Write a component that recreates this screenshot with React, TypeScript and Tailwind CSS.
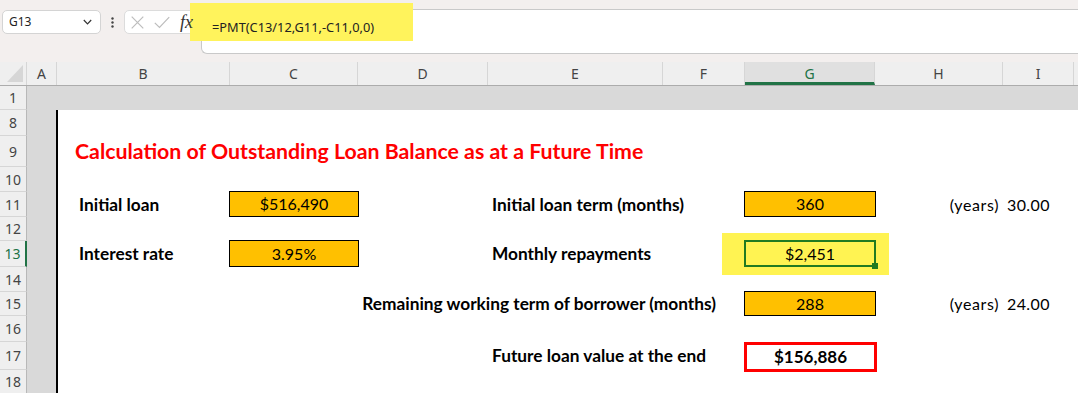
import React from 'react';

const UI_FONT = "font-['Noto_Sans',sans-serif]";
const SHEET_FONT = "font-['Lato','Liberation_Sans',sans-serif]";

const COLUMNS = [
  { label: 'A', w: 'w-[30px]' },
  { label: 'B', w: 'w-[173px]' },
  { label: 'C', w: 'w-[128px]' },
  { label: 'D', w: 'w-[130px]' },
  { label: 'E', w: 'w-[175px]' },
  { label: 'F', w: 'w-[82px]' },
  { label: 'G', w: 'w-[130px]' },
  { label: 'H', w: 'w-[128px]' },
  { label: 'I', w: 'w-[71px]' },
];

const RowHeader: React.FC<{ n: number; selected?: boolean }> = ({ n, selected }) => (
  <div
    className={`flex w-[27px] shrink-0 items-center justify-center border-b border-[#d6d6d6] bg-[#efefef] text-[14px] ${UI_FONT} ${
      selected ? 'border-r-2 border-r-[#217346] text-[#217346]' : 'border-r border-r-[#b8b8b8] text-[#444]'
    }`}
  >
    {n}
  </div>
);

// one sheet row: row header, grey column A, then white cells from column B
const SheetRow: React.FC<{ n: number; h: string; selected?: boolean; children?: React.ReactNode }> = ({ n, h, selected, children }) => (
  <div className={`flex ${h}`}>
    <RowHeader n={n} selected={selected} />
    <div className="w-[29px] shrink-0 bg-[#d9d9d9]" />
    <div className={`flex flex-1 items-stretch border-l-2 border-black ${SHEET_FONT} text-[16px] text-black`}>{children}</div>
  </div>
);

const Label: React.FC<{ w: string; pl?: string; children: React.ReactNode }> = ({ w, pl = 'pl-[4px]', children }) => (
  <div className={`${w} shrink-0 flex items-center whitespace-nowrap text-[17.3px] font-bold ${pl}`}>{children}</div>
);

const InputBox: React.FC<{ w: string; children: React.ReactNode }> = ({ w, children }) => (
  <div className={`${w} shrink-0`}>
    <div className="-mt-px -ml-px flex h-[calc(100%+1px)] w-[calc(100%+2px)] items-center justify-center border border-black bg-[#ffc000]">
      {children}
    </div>
  </div>
);

const Gap: React.FC<{ w: string }> = ({ w }) => <div className={`${w} shrink-0`} />;

const Years: React.FC<{ value: string }> = ({ value }) => (
  <>
    <div className="w-[128px] shrink-0 flex items-center justify-end pr-[4px] whitespace-nowrap tracking-[0.6px]">(years)</div>
    <div className="w-[71px] shrink-0 flex items-center pl-[4px] tracking-[0.4px]">{value}</div>
  </>
);

export default function App() {
  return (
    <div className="h-[393px] w-[1078px] overflow-hidden bg-white">
      {/* formula bar */}
      <div className="relative h-[62px] bg-[#f3efee]">
        <div className="absolute left-[190px] top-[3px] z-[1] h-[38px] w-[223px] bg-[#fff35c]" />
        <div className="flex items-start pl-[2px] pt-[10px]">
          <div className={`flex h-[24px] w-[99px] items-center justify-between rounded-[5px] border border-[#d4d4d4] bg-white pl-[6px] pr-[8px] text-[12px] text-[#222] ${UI_FONT}`}>
            <span>G13</span>
            <svg width="9" height="6" viewBox="0 0 9 6" fill="none">
              <path d="M0.8 1 L4.5 4.8 L8.2 1" stroke="#333" strokeWidth="1.2" />
            </svg>
          </div>
          <div className="flex h-[24px] w-[23px] items-center justify-center">
            <svg width="3" height="11" viewBox="0 0 3 11">
              <circle cx="1.5" cy="1.5" r="1.2" fill="#444" />
              <circle cx="1.5" cy="5.5" r="1.2" fill="#444" />
              <circle cx="1.5" cy="9.5" r="1.2" fill="#444" />
            </svg>
          </div>
          <div className="flex h-[24px] w-[72px] items-center rounded-[5px] border border-[#dcdcdc] bg-white pl-[6px]">
            <svg width="13" height="13" viewBox="0 0 13 13" fill="none">
              <path d="M0.7 0.7 L12.3 12.3 M12.3 0.7 L0.7 12.3" stroke="#bdbdbd" strokeWidth="1.2" />
            </svg>
            <svg className="ml-[10px]" width="16" height="13" viewBox="0 0 16 13" fill="none">
              <path d="M0.8 6.8 L5.5 11.5 L15.2 1.2" stroke="#bdbdbd" strokeWidth="1.2" />
            </svg>
            <span className="relative z-[2] ml-[10px] font-['Liberation_Serif',serif] text-[18px] italic leading-none text-[#333]">fx</span>
          </div>
          <div className="ml-[5px] -mt-px h-[45px] flex-1 rounded-l-[6px] border border-r-0 border-[#c9c9c9] bg-white pl-[10px] pt-[4px]">
            <span className={`relative z-[2] text-[12.8px] leading-[16px] text-[#222] ${UI_FONT}`}>=PMT(C13/12,G11,-C11,0,0)</span>
          </div>
        </div>
      </div>

      {/* column headers */}
      <div className={`flex h-[24px] border-b border-[#acacac] bg-[#efefef] text-[14px] text-[#444] ${UI_FONT}`}>
        <div className="relative w-[27px] shrink-0 border-r border-[#d6d6d6]">
          <svg className="absolute bottom-[3px] right-[3px]" width="16" height="17" viewBox="0 0 16 17">
            <path d="M16 0 L16 17 L0 17 Z" fill="#d6d6d6" />
          </svg>
        </div>
        {COLUMNS.map((c) =>
          c.label === 'G' ? (
            <div key={c.label} className={`${c.w} shrink-0 flex items-center justify-center border-r border-[#d6d6d6] border-b-[3px] border-b-[#217346] bg-[#e0e0e0] pt-[3px] text-[#217346]`}>
              {c.label}
            </div>
          ) : (
            <div key={c.label} className={`${c.w} shrink-0 flex items-center justify-center border-r border-[#d6d6d6]`}>
              {c.label}
            </div>
          )
        )}
        <div className="flex-1" />
      </div>

      {/* row 1 */}
      <div className="flex h-[24px]">
        <RowHeader n={1} />
        <div className="flex-1 bg-[#d9d9d9]" />
      </div>

      <SheetRow n={8} h="h-[26px]" />
      <SheetRow n={9} h="h-[31px]">
        <div className="flex items-center whitespace-nowrap pl-[17px] pt-[1px] text-[21.3px] font-bold text-[#ff0000]">
          Calculation of Outstanding Loan Balance as at a Future Time
        </div>
      </SheetRow>
      <SheetRow n={10} h="h-[25px]" />
      <SheetRow n={11} h="h-[25px]">
        <Label w="w-[172px]" pl="pl-[21px]">Initial loan</Label>
        <InputBox w="w-[128px]">$516,490</InputBox>
        <Gap w="w-[130px]" />
        <Label w="w-[175px]">Initial loan term (months)</Label>
        <Gap w="w-[82px]" />
        <InputBox w="w-[130px]">360</InputBox>
        <Years value="30.00" />
      </SheetRow>
      <SheetRow n={12} h="h-[24px]" />
      <SheetRow n={13} h="h-[26px]" selected>
        <Label w="w-[172px]" pl="pl-[21px]">Interest rate</Label>
        <InputBox w="w-[128px]">3.95%</InputBox>
        <Gap w="w-[130px]" />
        <Label w="w-[175px]">Monthly repayments</Label>
        <Gap w="w-[82px]" />
        <div className="relative w-[130px] shrink-0">
          <div className="absolute -left-[23px] -top-[8px] h-[42px] w-[167px] bg-[#fff352]" />
          <div className="absolute -left-px -top-px -right-px bottom-0 border-2 border-[#217a21]" />
          <div className="absolute -bottom-[2px] -right-[3px] h-[6px] w-[6px] bg-[#217a21]" />
          <div className="relative flex h-full items-center justify-center">$2,451</div>
        </div>
      </SheetRow>
      <SheetRow n={14} h="h-[25px]" />
      <SheetRow n={15} h="h-[24px]">
        <Gap w="w-[172px]" />
        <Gap w="w-[128px]" />
        <div className="flex w-[387px] shrink-0 items-center justify-end whitespace-nowrap pr-[29px] text-[17.3px] font-bold">
          Remaining working term of borrower (months)
        </div>
        <InputBox w="w-[130px]">288</InputBox>
        <Years value="24.00" />
      </SheetRow>
      <SheetRow n={16} h="h-[26px]" />
      <SheetRow n={17} h="h-[28px]">
        <Gap w="w-[172px]" />
        <Gap w="w-[128px]" />
        <Gap w="w-[130px]" />
        <Label w="w-[175px]">Future loan value at the end</Label>
        <Gap w="w-[82px]" />
        <div className="w-[130px] shrink-0">
          <div className="-ml-px flex h-[calc(100%+2px)] w-[calc(100%+3px)] items-center justify-center border-[3px] border-[#ff0000] text-[17px] font-bold">
            $156,886
          </div>
        </div>
      </SheetRow>
      <SheetRow n={18} h="h-[24px]" />
    </div>
  );
}
